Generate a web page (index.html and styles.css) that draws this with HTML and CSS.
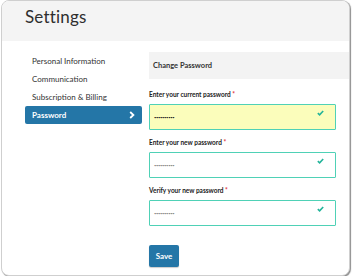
FILE: index.html
```html
<!DOCTYPE html>
<html lang="en">
<head>
  <meta charset="UTF-8">
  <meta name="viewport" content="width=device-width, initial-scale=1.0">
  <title>Settings</title>
  <link rel="stylesheet" href="styles.css">
</head>
<body>
  <div class="card">
    <div class="card-header">
      <h1>Settings</h1>
    </div>

    <div class="card-body">
      <ul class="side-nav">
        <li>Personal Information</li>
        <li>Communication</li>
        <li>Subscription &amp; Billing</li>
        <li class="active">
          Password
          <svg class="chevron" width="6" height="8" viewBox="0 0 6 8">
            <polyline points="1.2,1 4.4,4 1.2,7" fill="none" stroke="#fff" stroke-width="1.8"/>
          </svg>
        </li>
      </ul>

      <div class="panel">
        <div class="panel-title">Change Password</div>

        <div class="field">
          <label>Enter your current password <span class="req">*</span></label>
          <div class="input filled">
            <span class="dots">••••••••••</span>
            <svg class="check" width="7" height="6" viewBox="0 0 7 6">
              <polyline points="0.8,3.2 2.6,4.8 6.2,1" fill="none" stroke="#23b49a" stroke-width="1.6"/>
            </svg>
          </div>
        </div>

        <div class="field">
          <label>Enter your new password <span class="req">*</span></label>
          <div class="input">
            <span class="dots light">••••••••••</span>
            <svg class="check" width="7" height="6" viewBox="0 0 7 6">
              <polyline points="0.8,3.2 2.6,4.8 6.2,1" fill="none" stroke="#23b49a" stroke-width="1.6"/>
            </svg>
          </div>
        </div>

        <div class="field">
          <label>Verify your new password <span class="req">*</span></label>
          <div class="input">
            <span class="dots light">••••••••••</span>
            <svg class="check" width="7" height="6" viewBox="0 0 7 6">
              <polyline points="0.8,3.2 2.6,4.8 6.2,1" fill="none" stroke="#23b49a" stroke-width="1.6"/>
            </svg>
          </div>
        </div>

        <button class="btn-save">Save</button>
      </div>
    </div>
  </div>
</body>
</html>
```

FILE: styles.css
```css
*, *::before, *::after { box-sizing: border-box; }
html, body {
  margin: 0; padding: 0;
  background: #fff;
  font-family: Lato, 'Open Sans', sans-serif;
  color: #333;
}
body {
  padding: 0 2px 0 1px;
}
.card {
  width: 349px;
  height: 276px;
  border: 1px solid #cfcfcf;
  border-radius: 8px;
  overflow: hidden;
  box-shadow: 1px 1px 1px rgba(0, 0, 0, 0.45);
  background: #fff;
}
.card-header {
  height: 40px;
  background: #f4f4f4;
  padding: 5px 0 0 23px;
}
h1 {
  margin: 0;
  font-family: Lato, sans-serif;
  font-size: 17px;
  font-weight: 400;
  letter-spacing: 0.2px;
  color: #2e2e2e;
}
.card-body {
  display: flex;
  padding-top: 11px;
}
.side-nav {
  list-style: none;
  margin: 0 0 0 23px;
  padding: 0;
  width: 117px;
}
.side-nav li {
  height: 18px;
  display: flex;
  align-items: center;
  justify-content: space-between;
  padding: 0 7px;
  font-size: 8px;
  color: #333;
}
.side-nav li.active {
  background: #2476a7;
  color: #fff;
  font-weight: bold;
  border-radius: 2px;
}
.panel {
  flex: 1;
  margin-left: 7px;
}
.panel-title {
  height: 27px;
  background: #f3f3f3;
  padding-left: 4px;
  display: flex;
  align-items: center;
  font-size: 7.5px;
  font-weight: bold;
  color: #333;
}
.field {
  margin-top: 11px;
  width: 187px;
}
.field + .field { margin-top: 8px; }
label {
  display: block;
  height: 10px;
  line-height: 10px;
  margin-bottom: 4px;
  font-size: 6.5px;
  font-weight: bold;
  color: #222;
}
.req { color: #e0303a; }
.input {
  position: relative;
  height: 26px;
  border: 1px solid #4fd1b6;
  border-radius: 1px;
  background: #fff;
  display: flex;
  align-items: center;
  padding-left: 4px;
}
.input.filled { background: #fbfdbb; }
.dots {
  font-size: 4px;
  letter-spacing: -0.3px;
  color: #222;
}
.dots.light { color: #888; }
.check {
  position: absolute;
  top: 5px;
  right: 11px;
}
.btn-save {
  margin-top: 19px;
  width: 30px;
  height: 22px;
  padding: 0;
  border: none;
  border-radius: 2px;
  background: #2476a7;
  color: #fff;
  font-family: Lato, sans-serif;
  font-size: 8px;
  font-weight: bold;
  box-shadow: 0 1px 1px rgba(0, 0, 0, 0.2);
}
```
